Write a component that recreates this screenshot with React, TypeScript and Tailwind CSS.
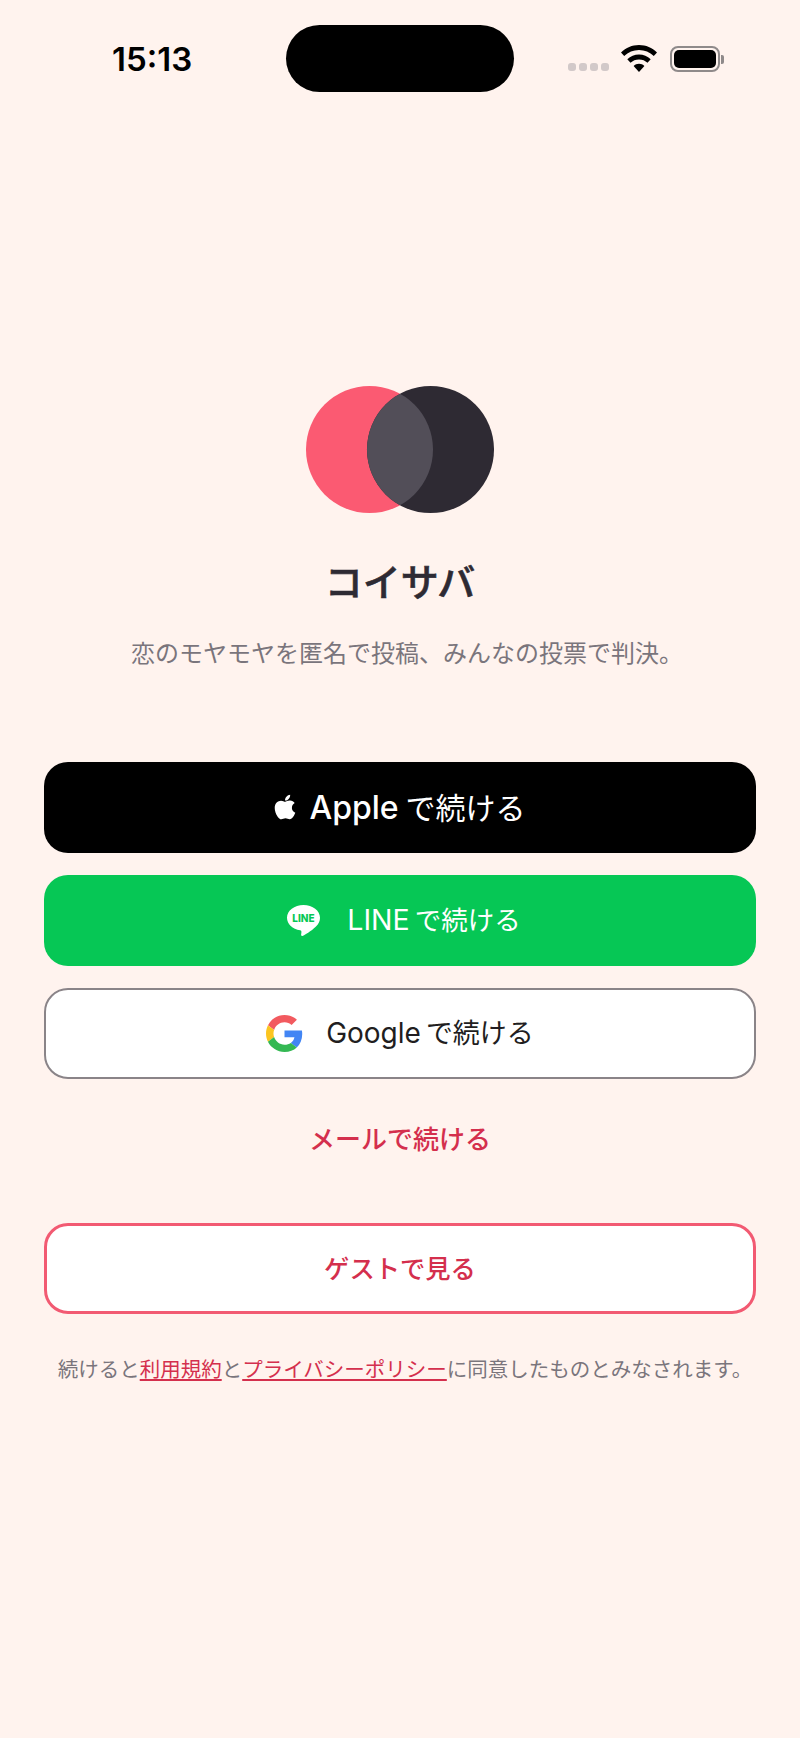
import { FaApple } from 'react-icons/fa';

const JP = "font-['Inter','Noto_Sans_CJK_JP',sans-serif]";

function StatusBar() {
  return (
    <div className="relative h-[120px] shrink-0">
      <span className="absolute left-[112px] top-[40px] text-[33px] leading-[38px] font-semibold text-black">15:13</span>
      {/* dynamic island */}
      <div className="absolute left-[286px] top-[25px] h-[67px] w-[228px] rounded-[34px] bg-black" />
      <div className="absolute left-[568px] top-[63px] flex gap-[3px]">
        <i className="h-[8px] w-[8px] rounded-[3px] bg-[#d2c9c9]" />
        <i className="h-[8px] w-[8px] rounded-[3px] bg-[#d2c9c9]" />
        <i className="h-[8px] w-[8px] rounded-[3px] bg-[#d2c9c9]" />
        <i className="h-[8px] w-[8px] rounded-[3px] bg-[#d2c9c9]" />
      </div>
      <svg className="absolute left-[621px] top-[45px]" width="36" height="27" viewBox="0 0 36 27">
        <path d="M18 0C11 0 5 2.700 0 7.500L3.200 11C7.200 7.200 12.300 5 18 5S28.800 7.200 32.800 11L36 7.500C31 2.700 25 0 18 0Z" fill="#000" />
        <path d="M18 9.500C13.500 9.500 9.500 11.200 6.300 14.200L9.500 17.700C11.800 15.600 14.700 14.400 18 14.400S24.200 15.600 26.500 17.700L29.700 14.200C26.500 11.200 22.500 9.500 18 9.500Z" fill="#000" />
        <path d="M18 18.800C15.900 18.800 14 19.600 12.600 20.900L18 27L23.400 20.900C22 19.600 20.100 18.800 18 18.800Z" fill="#000" />
      </svg>
      <div className="absolute left-[670px] top-[46px] flex items-center">
        <div className="h-[26px] w-[50px] rounded-[8px] border-2 border-[#8f8a8a] p-[2px]">
          <div className="h-full w-full rounded-[5px] bg-black" />
        </div>
        <div className="ml-[1px] h-[9px] w-[3px] rounded-r-[2px] bg-[#8f8a8a]" />
      </div>
    </div>
  );
}

function Logo() {
  return (
    <svg width="188" height="127" viewBox="0 0 188 127">
      <circle cx="63.500" cy="63.500" r="63.500" fill="#fb5a72" />
      <circle cx="124.500" cy="63.500" r="63.500" fill="#2e2a33" />
      <clipPath id="overlap">
        <circle cx="63.500" cy="63.500" r="63.500" />
      </clipPath>
      <circle cx="124.500" cy="63.500" r="63.500" fill="#524e58" clipPath="url(#overlap)" />
    </svg>
  );
}

function LineIcon() {
  return (
    <svg width="33" height="32" viewBox="0 0 33 32">
      <path d="M16.500 0C7.400 0 0 5.700 0 12.700C0 19 5.600 24 13.200 25.200C13.900 25.400 14.600 25.800 14.400 27.400L14.100 29.800C14 30.600 14.600 31.400 15.900 30.800C17.200 30.200 24.400 26 28.700 21.700C31.600 19 33 16 33 12.700C33 5.700 25.600 0 16.500 0Z" fill="#fff" />
      <text x="16.500" y="17" textAnchor="middle" fontSize="10" fontWeight="800" fill="#06c755" fontFamily="Inter, sans-serif">LINE</text>
    </svg>
  );
}

function GoogleIcon() {
  return (
    <svg width="37" height="37" viewBox="0 0 48 48">
      <path fill="#f25a5f" d="M24 9.500c3.500 0 6.700 1.200 9.200 3.600l6.900-6.900C35.900 2.400 30.500 0 24 0 14.600 0 6.500 5.400 2.600 13.200l8 6.200C12.400 13.700 17.700 9.500 24 9.500z" />
      <path fill="#4285f4" d="M47 24.500c0-1.600-.1-3.100-.4-4.500H24v9h12.900c-.6 3-2.200 5.500-4.800 7.200l7.700 6c4.500-4.200 7.200-10.400 7.200-17.700z" />
      <path fill="#fbc520" d="M10.500 28.600c-.5-1.500-.8-3-.8-4.600s.3-3.100.8-4.600l-8-6.200C.9 16.400 0 20.100 0 24s.9 7.600 2.600 10.800l7.900-6.200z" />
      <path fill="#34b853" d="M24 48c6.500 0 11.900-2.100 15.900-5.800l-7.700-6c-2.200 1.500-5 2.300-8.200 2.300-6.300 0-11.600-4.200-13.500-9.900l-8 6.200C6.500 42.600 14.600 48 24 48z" />
    </svg>
  );
}

export default function App() {
  return (
    <div className={`flex min-h-[1738px] flex-col bg-[#fff3ee] ${JP}`}>
      <StatusBar />

      <div className="flex flex-col items-center pt-[266px]">
        <Logo />
        <h1 className="mt-[43px] text-[38px] leading-[52px] font-medium text-[#2e2a33] [-webkit-text-stroke:0.6px_#2e2a33]">コイサバ</h1>
        <p className="mt-[28px] pl-[14px] text-[24px] leading-[36px] text-[#7a757c]">恋のモヤモヤを匿名で投稿、みんなの投票で判決。</p>
      </div>

      <div className="mt-[90px] flex flex-col gap-[22px] px-[44px]">
        <button className="flex h-[91px] items-center justify-center gap-[10px] rounded-[24px] bg-black pr-[3px] text-[30px] text-white">
          <FaApple className="mb-[2px] text-[28px]" />
          <span><span className="text-[32px] font-medium">Apple</span><span className="ml-[7px]">で続ける</span></span>
        </button>
        <button className="flex h-[91px] items-center justify-center gap-[27px] rounded-[24px] bg-[#06c755] pl-[8px] text-[26.5px] text-white">
          <LineIcon />
          <span><span className="text-[28.5px]">LINE</span><span className="ml-[5px]">で続ける</span></span>
        </button>
        <button className="flex h-[91px] items-center justify-center gap-[23px] rounded-[24px] border-2 border-[#8a8488] bg-white text-[27px] text-[#211d20]">
          <GoogleIcon />
          <span><span className="text-[28px]">Google</span><span className="ml-[5px]">で続ける</span></span>
        </button>
      </div>

      <div className="mt-[42px] text-center text-[26px] leading-[38px] font-medium text-[#d42f4d]">メールで続ける</div>

      <button className="mx-[44px] mt-[64px] h-[91px] rounded-[24px] border-[3px] border-[#f25a72] bg-white text-[25.3px] font-medium text-[#d42f4d]">
        ゲストで見る
      </button>

      <p className="mt-[40px] pl-[10px] text-center text-[20.5px] leading-[32px] text-[#7a757c]">
        続けると
        <a className="text-[#d42f4d] underline underline-offset-2">利用規約</a>
        と
        <a className="text-[#d42f4d] underline underline-offset-2">プライバシーポリシー</a>
        に同意したものとみなされます。
      </p>
    </div>
  );
}
